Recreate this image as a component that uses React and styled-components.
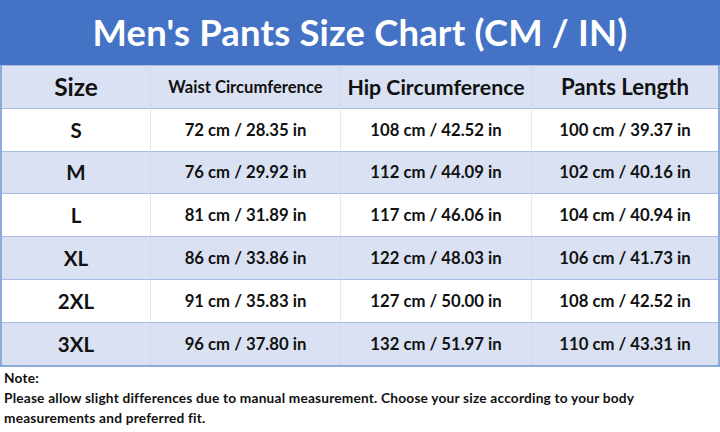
import styled, { createGlobalStyle } from "styled-components";

const GlobalStyle = createGlobalStyle`
  html, body {
    margin: 0;
    padding: 0;
    background: #ffffff;
  }
  body {
    width: 720px;
    height: 432px;
    overflow: hidden;
    font-family: "Lato", "Noto Sans", sans-serif;
    color: #111111;
  }
`;

const Page = styled.div`
  width: 720px;
  height: 432px;
  display: flex;
  flex-direction: column;
  background: #ffffff;
`;

const TitleBar = styled.div`
  height: 65px;
  background: #4472c4;
  display: flex;
  align-items: center;
  justify-content: center;
  h1 {
    margin: 0 0 2px;
    color: #ffffff;
    font-size: 36.4px;
    font-weight: 700;
    letter-spacing: 0.2px;
  }
`;

const Table = styled.div`
  display: grid;
  grid-template-columns: 148px 190px 191px 1fr;
  border-left: 2px solid #8eaadb;
  border-right: 2px solid #8eaadb;
  border-bottom: 2px solid #8eaadb;
`;

const Cell = styled.div`
  height: 41.8px;
  display: flex;
  align-items: center;
  justify-content: center;
  background: ${({ $shaded }) => ($shaded ? "#d9e1f2" : "#ffffff")};
  border-top: 1px solid #a9bde3;
  border-left: ${({ $first, $shaded }) =>
    $first ? "none" : `1px solid ${$shaded ? "#d0d9ec" : "#e6e6e6"}`};
  font-weight: 700;
  font-size: ${({ $size }) => $size || 16}px;
  white-space: nowrap;
`;

const Notes = styled.div`
  padding: 1px 4px 0;
  max-width: 650px;
  font-size: 13.7px;
  font-weight: 700;
  letter-spacing: 0.2px;
  line-height: 20px;
  p {
    margin: 0;
  }
`;

const headers = [
  { label: "Size", size: 24.5 },
  { label: "Waist Circumference", size: 16.6 },
  { label: "Hip Circumference", size: 21.3 },
  { label: "Pants Length", size: 22.2 },
];

const rows = [
  ["S", "72 cm / 28.35 in", "108 cm / 42.52 in", "100 cm / 39.37 in"],
  ["M", "76 cm / 29.92 in", "112 cm / 44.09 in", "102 cm / 40.16 in"],
  ["L", "81 cm / 31.89 in", "117 cm / 46.06 in", "104 cm / 40.94 in"],
  ["XL", "86 cm / 33.86 in", "122 cm / 48.03 in", "106 cm / 41.73 in"],
  ["2XL", "91 cm / 35.83 in", "127 cm / 50.00 in", "108 cm / 42.52 in"],
  ["3XL", "96 cm / 37.80 in", "132 cm / 51.97 in", "110 cm / 43.31 in"],
];

export default function App() {
  return (
    <Page>
      <GlobalStyle />
      <TitleBar>
        <h1>Men's Pants Size Chart (CM / IN)</h1>
      </TitleBar>
      <Table>
        {headers.map((h, i) => (
          <Cell key={h.label} $shaded $first={i === 0} $size={h.size}>
            {h.label}
          </Cell>
        ))}
        {rows.map((row, r) =>
          row.map((value, c) => (
            <Cell
              key={`${r}-${c}`}
              $shaded={r % 2 === 1}
              $first={c === 0}
              $size={c === 0 ? 20.5 : 16.7}
            >
              {value}
            </Cell>
          ))
        )}
      </Table>
      <Notes>
        <p>Note:</p>
        <p>
          Please allow slight differences due to manual measurement. Choose your
          size according to your body measurements and preferred fit.
        </p>
      </Notes>
    </Page>
  );
}
